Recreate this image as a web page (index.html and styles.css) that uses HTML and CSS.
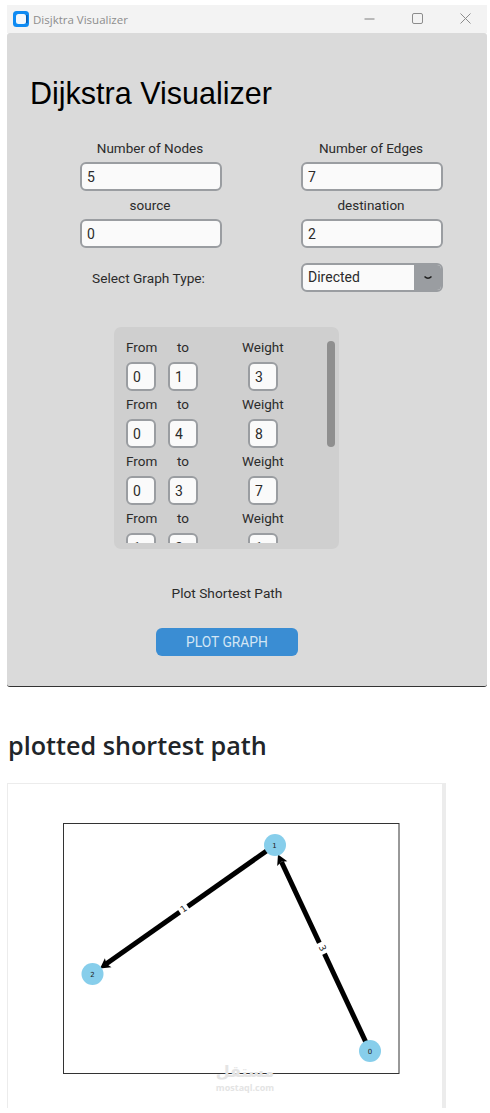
FILE: index.html
```html
<!DOCTYPE html>
<html lang="en">
<head>
<meta charset="utf-8">
<title>Dijkstra Visualizer</title>
<link rel="stylesheet" href="styles.css">
</head>
<body>
<main class="window">
  <header class="titlebar">
    <svg class="app-icon" viewBox="0 0 16 16" width="16" height="16" aria-hidden="true">
      <rect width="16" height="16" rx="3.5" fill="#0f8bf3"/>
      <rect x="3" y="3" width="10" height="10" rx="2.5" fill="#f3f8fd"/>
      <rect x="13" y="4" width="1.6" height="8" fill="#0a5db0"/>
    </svg>
    <span class="app-title">Disjktra Visualizer</span>
    <div class="controls">
      <svg width="12" height="12" viewBox="0 0 12 12"><path d="M.5 6h10" stroke="#7f7f7f" fill="none"/></svg>
      <svg width="12" height="12" viewBox="0 0 12 12"><rect x=".5" y=".5" width="10" height="10" rx="1.5" stroke="#8c8c8c" fill="none"/></svg>
      <svg width="12" height="12" viewBox="0 0 12 12"><path d="M.5.5l10 10M10.500.5l-10 10" stroke="#8c8c8c" fill="none"/></svg>
    </div>
  </header>
  <section class="content">
    <h1 class="main-title">Dijkstra Visualizer</h1>
    <div class="form-grid">
      <div class="field"><label>Number of Nodes</label><input class="text-input" value="5" readonly></div>
      <div class="field"><label>Number of Edges</label><input class="text-input" value="7" readonly></div>
      <div class="field"><label>source</label><input class="text-input" value="0" readonly></div>
      <div class="field"><label>destination</label><input class="text-input" value="2" readonly></div>
    </div>
    <div class="type-row">
      <span class="type-label">Select Graph Type:</span>
      <div class="select">
        <span class="select-value">Directed</span>
        <span class="select-btn">
          <svg width="10" height="6" viewBox="0 0 10 6"><path d="M1.500 1.500Q5 5 8.500 1.500" stroke="#222" stroke-width="1.500" fill="none"/></svg>
        </span>
      </div>
    </div>
    <div class="edge-panel">
      <div class="edge-list">
        <div class="edge-row">
          <span class="lab lab-from">From</span><span class="lab lab-to">to</span><span class="lab lab-weight">Weight</span>
          <input class="mini" value="0" readonly><input class="mini" value="1" readonly><input class="mini mini-w" value="3" readonly>
        </div>
        <div class="edge-row">
          <span class="lab lab-from">From</span><span class="lab lab-to">to</span><span class="lab lab-weight">Weight</span>
          <input class="mini" value="0" readonly><input class="mini" value="4" readonly><input class="mini mini-w" value="8" readonly>
        </div>
        <div class="edge-row">
          <span class="lab lab-from">From</span><span class="lab lab-to">to</span><span class="lab lab-weight">Weight</span>
          <input class="mini" value="0" readonly><input class="mini" value="3" readonly><input class="mini mini-w" value="7" readonly>
        </div>
        <div class="edge-row">
          <span class="lab lab-from">From</span><span class="lab lab-to">to</span><span class="lab lab-weight">Weight</span>
          <input class="mini" value="1" readonly><input class="mini" value="2" readonly><input class="mini mini-w" value="1" readonly>
        </div>
      </div>
      <div class="scrollbar"></div>
    </div>
    <div class="plot-group">
      <p class="plot-label">Plot Shortest Path</p>
      <button class="plot-btn" type="button">PLOT GRAPH</button>
    </div>
  </section>
</main>
<h2 class="section-title">plotted shortest path</h2>
<figure class="plot-card">
  <svg class="plot" viewBox="8 784 434 324" width="434" height="324" aria-label="Plotted shortest path graph">
    <rect x="63.500" y="823.500" width="335.500" height="250" fill="#fff" stroke="#333" stroke-width="1"/>
    <path d="M275 845L106 964" stroke="#000" stroke-width="5" fill="none"/>
    <path d="M370 1051L281.500 862" stroke="#000" stroke-width="5" fill="none"/>
    <polygon points="100,968.500 111.500,967.200 106.500,963.900 104.900,958.200" fill="#000"/>
    <polygon points="278,854.500 287.300,861.300 281.400,861.800 277.200,866" fill="#000"/>
    <rect x="-5" y="-4" width="10" height="8" fill="#fff" transform="translate(183.500 909) rotate(-35)"/>
    <rect x="-6" y="-4" width="12" height="8" fill="#fff" transform="translate(322.500 948) rotate(65)"/>
    <text class="edge-text" transform="translate(183.500 909) rotate(-35)" y="3">1</text>
    <text class="edge-text" transform="translate(322.500 948) rotate(65)" y="3">3</text>
    <circle cx="275" cy="845" r="11" fill="#87ceeb"/>
    <circle cx="92.500" cy="974" r="11" fill="#87ceeb"/>
    <circle cx="370" cy="1051" r="11" fill="#87ceeb"/>
    <text class="node-text" x="274.500" y="847.500">1</text>
    <text class="node-text" x="92.500" y="976.500">2</text>
    <text class="node-text" x="370" y="1053.500">0</text>
  </svg>
  <div class="watermark"><span class="wm-ar">مستقل</span><span class="wm-en">mostaql.com</span></div>
</figure>
</body>
</html>
```
FILE: styles.css
```css
* { box-sizing: border-box; }
html, body { margin: 0; padding: 0; background: #fff; }
body {
  height: 1113px;
  overflow: hidden;
  padding: 5px 0 0 7px;
  font-family: Roboto, "Liberation Sans", sans-serif;
  color: #2b2b2b;
}
.window { width: 480px; }
.titlebar {
  height: 28px;
  background: #f3f3f3;
  display: flex;
  align-items: center;
  padding-left: 6px;
}
.app-icon { flex: none; }
.app-title {
  margin-left: 4px;
  font: 11.500px "Open Sans", "Liberation Sans", sans-serif;
  color: #8d8d8d;
}
.controls {
  margin-left: auto;
  display: flex;
  gap: 36px;
  padding-right: 15px;
}
.content {
  height: 654px;
  background: #dadada;
  border-radius: 3px;
  border-bottom: 1.500px solid #333;
  display: flex;
  flex-direction: column;
  align-items: flex-start;
}
.main-title {
  margin: 42px 0 0 23px;
  font: 400 30.500px/36px "Liberation Sans", Arial, sans-serif;
  color: #000;
}
.form-grid {
  margin: 29px 0 0 73px;
  width: 363px;
  display: grid;
  grid-template-columns: 142px 142px;
  column-gap: 79px;
  row-gap: 6px;
}
.field { display: flex; flex-direction: column; align-items: center; }
.field label { font-size: 13.500px; line-height: 17px; margin: 0 2px 5px 0; white-space: nowrap; }
.text-input {
  width: 142px;
  height: 29px;
  border: 2px solid #9a9da1;
  border-radius: 6px;
  background: #fafafa;
  padding: 0 5px;
  font: 14px Roboto, sans-serif;
  color: #2b2b2b;
  outline: none;
}
.type-row {
  margin: 15px 0 0 73px;
  display: flex;
  align-items: center;
  width: 363px;
  height: 29px;
}
.type-label { width: 221px; padding-left: 12px; font-size: 13.700px; }
.select {
  width: 142px;
  height: 29px;
  display: flex;
  border: 2px solid #9a9da1;
  border-radius: 6px;
  background: #fafafa;
  overflow: hidden;
}
.select-value { flex: 1; padding-left: 5px; font-size: 14px; line-height: 25px; }
.select-btn {
  width: 27px;
  background: #9a9da1;
  display: flex;
  align-items: center;
  justify-content: center;
}
.edge-panel {
  position: relative;
  margin: 35px 0 0 107px;
  width: 225px;
  height: 222px;
  background: #cfcfcf;
  border-radius: 7px;
  padding: 12px 0 5px 12px;
}
.edge-list { height: 204px; overflow: hidden; }
.edge-row {
  height: 57px;
  width: 170px;
  display: grid;
  grid-template-columns: 30px 30px 30px;
  column-gap: 12px;
  grid-template-rows: 17px 29px;
  row-gap: 6px;
}
.edge-row .mini-w { grid-column: 3; margin-left: 38px; }
.lab { font-size: 13.500px; line-height: 17px; white-space: nowrap; }
.lab-to { text-align: center; }
.lab-weight { margin-left: 32px; }
.mini {
  width: 30px;
  height: 29px;
  border: 2px solid #9a9da1;
  border-radius: 6px;
  background: #fafafa;
  padding: 0 5px;
  font: 14px Roboto, sans-serif;
  color: #2b2b2b;
  outline: none;
}
.scrollbar {
  position: absolute;
  left: 213px;
  top: 14px;
  width: 8px;
  height: 106px;
  background: #8f8f8f;
  border-radius: 4px;
}
.plot-group {
  margin: 36px 0 0 149px;
  width: 142px;
  display: flex;
  flex-direction: column;
  align-items: center;
}
.plot-label { margin: 0; font-size: 13.700px; line-height: 17px; white-space: nowrap; }
.plot-btn {
  margin-top: 26px;
  width: 142px;
  height: 28px;
  border: 0;
  border-radius: 6px;
  background: #3a8dd3;
  color: #d3e6f5;
  font: 13.800px Roboto, sans-serif;
}
.section-title {
  margin: 41px 0 0 1px;
  font: 600 25.200px/34px "Open Sans", "Noto Sans", sans-serif;
  color: #212529;
}
.plot-card {
  position: relative;
  margin: 21px 0 0;
  width: 439px;
  height: 325px;
  border-top: 1px solid #ececec;
  border-left: 1px solid #ececec;
  border-right: 4px solid #ececec;
}
.plot { display: block; }
.edge-text, .node-text {
  font-family: "DejaVu Sans", sans-serif;
  text-anchor: middle;
  fill: #222;
}
.edge-text { font-size: 9px; }
.node-text { font-size: 7px; }
.watermark {
  position: absolute;
  left: 206px;
  top: 279px;
  width: 62px;
  display: flex;
  flex-direction: column;
  align-items: center;
  color: #e4e4e4;
}
.wm-ar { font: 700 16px/17px "DejaVu Sans", sans-serif; height: 17px; overflow: hidden; }
.wm-en { font: 700 9px/9px "Open Sans", sans-serif; margin-top: 3px; }
```
